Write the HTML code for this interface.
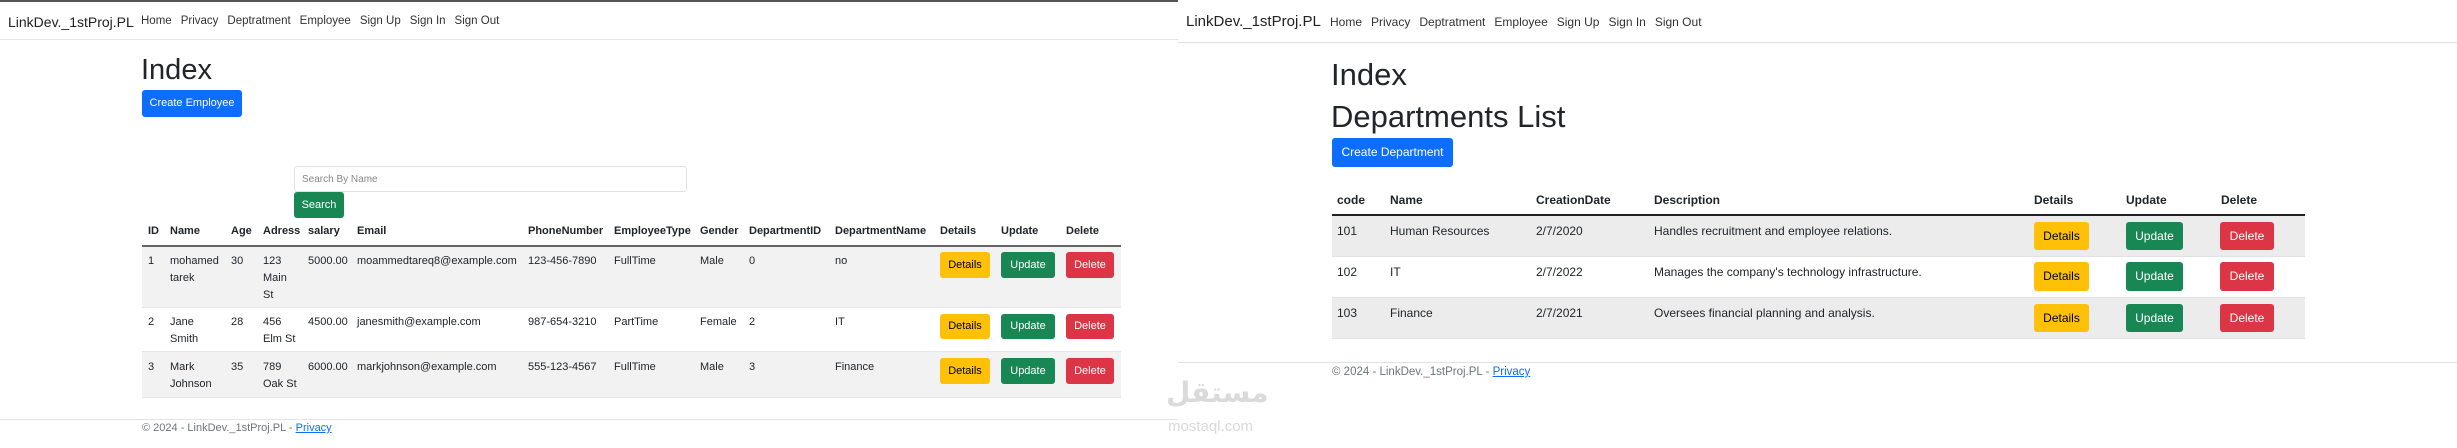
<!DOCTYPE html>
<html><head><meta charset="utf-8"><style>
*{margin:0;padding:0;box-sizing:border-box}
body{width:2457px;height:448px;position:relative;background:#fff;font-family:"Liberation Sans",sans-serif;color:#212529;overflow:hidden}
.a{position:absolute;white-space:nowrap}
.btn{position:absolute;border-radius:3px;color:#fff;text-align:center;font-size:11px}
.y{background:#ffc107;color:#000}.g{background:#198754}.r{background:#dc3545}.b{background:#0d6efd}
.t{font-size:11px}.h{font-size:11px;font-weight:bold}
.t2{font-size:12px}.h2{font-size:12px;font-weight:bold}
.nav{position:absolute;display:flex;gap:9px;font-size:12px;color:#333;white-space:nowrap}
</style></head><body>
<!-- left page -->
<div class="a" style="left:0;top:0;width:1178px;height:2px;background:#555"></div>
<div class="a" style="left:8px;top:14px;font-size:14px;color:#222">LinkDev._1stProj.PL</div>
<div class="nav" style="left:141px;top:15px;font-size:11.5px"><span>Home</span><span>Privacy</span><span>Deptratment</span><span>Employee</span><span>Sign Up</span><span>Sign In</span><span>Sign Out</span></div>
<div class="a" style="left:0;top:39px;width:1178px;height:1px;background:#e5e5e5"></div>
<div class="a" style="left:141px;top:54px;font-size:29px;font-weight:500">Index</div>
<div class="btn b" style="left:142px;top:90px;width:100px;height:27px;line-height:27px">Create Employee</div>
<div class="a" style="left:294px;top:166px;width:393px;height:26px;border:1px solid #dee2e6;border-radius:3px;font-size:10px;color:#888;padding:7px 7px">Search By Name</div>
<div class="btn g" style="left:294px;top:192px;width:50px;height:26px;line-height:26px">Search</div>
<div class="a" style="left:142px;top:246px;width:979px;height:61px;background:#f2f2f2"></div>
<div class="a" style="left:142px;top:351px;width:979px;height:46px;background:#f2f2f2"></div>
<div class="a" style="left:142px;top:245px;width:979px;height:2px;background:#666"></div>
<div class="a" style="left:142px;top:307px;width:979px;height:1px;background:#e6e6e6"></div>
<div class="a" style="left:142px;top:351px;width:979px;height:1px;background:#e6e6e6"></div>
<div class="a" style="left:142px;top:397px;width:979px;height:1px;background:#e6e6e6"></div>
<div class="a h" style="left:148px;top:225px">ID</div>
<div class="a h" style="left:170px;top:225px">Name</div>
<div class="a h" style="left:231px;top:225px">Age</div>
<div class="a h" style="left:263px;top:225px">Adress</div>
<div class="a h" style="left:308px;top:225px">salary</div>
<div class="a h" style="left:357px;top:225px">Email</div>
<div class="a h" style="left:528px;top:225px">PhoneNumber</div>
<div class="a h" style="left:614px;top:225px">EmployeeType</div>
<div class="a h" style="left:700px;top:225px">Gender</div>
<div class="a h" style="left:749px;top:225px">DepartmentID</div>
<div class="a h" style="left:835px;top:225px">DepartmentName</div>
<div class="a h" style="left:940px;top:225px">Details</div>
<div class="a h" style="left:1001px;top:225px">Update</div>
<div class="a h" style="left:1066px;top:225px">Delete</div>
<div class="t" style="position:absolute;left:0;top:253px;line-height:17px">
<div class="a" style="left:148px">1</div><div class="a" style="left:170px">mohamed<br>tarek</div><div class="a" style="left:231px">30</div><div class="a" style="left:263px">123<br>Main<br>St</div><div class="a" style="left:308px">5000.00</div><div class="a" style="left:357px">moammedtareq8@example.com</div><div class="a" style="left:528px">123-456-7890</div><div class="a" style="left:614px">FullTime</div><div class="a" style="left:700px">Male</div><div class="a" style="left:749px">0</div><div class="a" style="left:835px">no</div></div>
<div class="t" style="position:absolute;left:0;top:314px;line-height:17px">
<div class="a" style="left:148px">2</div><div class="a" style="left:170px">Jane<br>Smith</div><div class="a" style="left:231px">28</div><div class="a" style="left:263px">456<br>Elm St</div><div class="a" style="left:308px">4500.00</div><div class="a" style="left:357px">janesmith@example.com</div><div class="a" style="left:528px">987-654-3210</div><div class="a" style="left:614px">PartTime</div><div class="a" style="left:700px">Female</div><div class="a" style="left:749px">2</div><div class="a" style="left:835px">IT</div></div>
<div class="t" style="position:absolute;left:0;top:359px;line-height:17px">
<div class="a" style="left:148px">3</div><div class="a" style="left:170px">Mark<br>Johnson</div><div class="a" style="left:231px">35</div><div class="a" style="left:263px">789<br>Oak St</div><div class="a" style="left:308px">6000.00</div><div class="a" style="left:357px">markjohnson@example.com</div><div class="a" style="left:528px">555-123-4567</div><div class="a" style="left:614px">FullTime</div><div class="a" style="left:700px">Male</div><div class="a" style="left:749px">3</div><div class="a" style="left:835px">Finance</div></div>
<div class="btn y" style="left:940px;top:252px;width:50px;height:26px;line-height:26px">Details</div>
<div class="btn g" style="left:1001px;top:252px;width:54px;height:26px;line-height:26px">Update</div>
<div class="btn r" style="left:1066px;top:252px;width:48px;height:26px;line-height:26px">Delete</div>
<div class="btn y" style="left:940px;top:314px;width:50px;height:25px;line-height:25px">Details</div>
<div class="btn g" style="left:1001px;top:314px;width:54px;height:25px;line-height:25px">Update</div>
<div class="btn r" style="left:1066px;top:314px;width:48px;height:25px;line-height:25px">Delete</div>
<div class="btn y" style="left:940px;top:358px;width:50px;height:26px;line-height:26px">Details</div>
<div class="btn g" style="left:1001px;top:358px;width:54px;height:26px;line-height:26px">Update</div>
<div class="btn r" style="left:1066px;top:358px;width:48px;height:26px;line-height:26px">Delete</div>
<div class="a" style="left:0;top:419px;width:1178px;height:1px;background:#e5e5e5"></div>
<div class="a" style="left:142px;top:422px;font-size:11px;color:#6c757d">© 2024 - LinkDev._1stProj.PL - <span style="color:#0d6efd;text-decoration:underline">Privacy</span></div>

<!-- right page -->
<div class="a" style="left:1186px;top:13px;font-size:15px;color:#222">LinkDev._1stProj.PL</div>
<div class="nav" style="left:1330px;top:15px;font-size:12px"><span>Home</span><span>Privacy</span><span>Deptratment</span><span>Employee</span><span>Sign Up</span><span>Sign In</span><span>Sign Out</span></div>
<div class="a" style="left:1178px;top:42px;width:1279px;height:1px;background:#e0e0e0"></div>
<div class="a" style="left:1331px;top:57px;font-size:31px;font-weight:500">Index</div>
<div class="a" style="left:1331px;top:99px;font-size:31px;font-weight:500">Departments List</div>
<div class="btn b" style="left:1332px;top:138px;width:121px;height:29px;line-height:29px;font-size:12px">Create Department</div>
<div class="a" style="left:1332px;top:216px;width:973px;height:40px;background:#ececec"></div>
<div class="a" style="left:1332px;top:297px;width:973px;height:41px;background:#ececec"></div>
<div class="a" style="left:1332px;top:214px;width:973px;height:2px;background:#222"></div>
<div class="a" style="left:1332px;top:256px;width:973px;height:1px;background:#e2e2e2"></div>
<div class="a" style="left:1332px;top:297px;width:973px;height:1px;background:#e2e2e2"></div>
<div class="a" style="left:1332px;top:338px;width:973px;height:1px;background:#e2e2e2"></div>
<div class="a h2" style="left:1337px;top:193px">code</div>
<div class="a h2" style="left:1390px;top:193px">Name</div>
<div class="a h2" style="left:1536px;top:193px">CreationDate</div>
<div class="a h2" style="left:1654px;top:193px">Description</div>
<div class="a h2" style="left:2034px;top:193px">Details</div>
<div class="a h2" style="left:2126px;top:193px">Update</div>
<div class="a h2" style="left:2221px;top:193px">Delete</div>
<div class="a t2" style="left:1337px;top:224px">101</div><div class="a t2" style="left:1390px;top:224px">Human Resources</div><div class="a t2" style="left:1536px;top:224px">2/7/2020</div><div class="a t2" style="left:1654px;top:224px">Handles recruitment and employee relations.</div>
<div class="a t2" style="left:1337px;top:265px">102</div><div class="a t2" style="left:1390px;top:265px">IT</div><div class="a t2" style="left:1536px;top:265px">2/7/2022</div><div class="a t2" style="left:1654px;top:265px">Manages the company's technology infrastructure.</div>
<div class="a t2" style="left:1337px;top:306px">103</div><div class="a t2" style="left:1390px;top:306px">Finance</div><div class="a t2" style="left:1536px;top:306px">2/7/2021</div><div class="a t2" style="left:1654px;top:306px">Oversees financial planning and analysis.</div>
<div class="btn y" style="left:2034px;top:222px;width:55px;height:28px;line-height:28px;font-size:12px">Details</div>
<div class="btn g" style="left:2126px;top:222px;width:57px;height:28px;line-height:28px;font-size:12px">Update</div>
<div class="btn r" style="left:2220px;top:222px;width:54px;height:28px;line-height:28px;font-size:12px">Delete</div>
<div class="btn y" style="left:2034px;top:262px;width:55px;height:29px;line-height:29px;font-size:12px">Details</div>
<div class="btn g" style="left:2126px;top:262px;width:57px;height:29px;line-height:29px;font-size:12px">Update</div>
<div class="btn r" style="left:2220px;top:262px;width:54px;height:29px;line-height:29px;font-size:12px">Delete</div>
<div class="btn y" style="left:2034px;top:304px;width:55px;height:28px;line-height:28px;font-size:12px">Details</div>
<div class="btn g" style="left:2126px;top:304px;width:57px;height:28px;line-height:28px;font-size:12px">Update</div>
<div class="btn r" style="left:2220px;top:304px;width:54px;height:28px;line-height:28px;font-size:12px">Delete</div>
<div class="a" style="left:1178px;top:362px;width:1279px;height:1px;background:#e2e2e2"></div>
<div class="a" style="left:1332px;top:366px;font-size:11.5px;color:#6c757d">© 2024 - LinkDev._1stProj.PL - <span style="color:#0d6efd;text-decoration:underline">Privacy</span></div>
<div class="a" style="left:1166px;top:376px;font-size:28px;font-weight:bold;color:#dadada;font-family:'DejaVu Sans',sans-serif">مستقل</div>
<div class="a" style="left:1168px;top:418px;font-size:15px;color:#dadada">mostaql.com</div>
</body></html>
